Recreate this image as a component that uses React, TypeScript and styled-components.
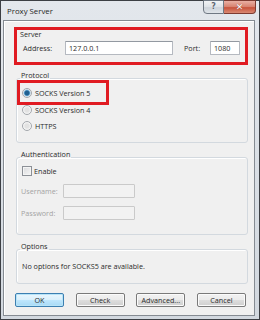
import React from "react";
import styled, { createGlobalStyle } from "styled-components";

const GlobalStyle = createGlobalStyle`
  html, body {
    margin: 0;
    padding: 0;
    background: #ffffff;
  }
  body {
    font-family: "Open Sans", "Liberation Sans", sans-serif;
    font-size: 7.2px;
    color: #2b2b2b;
  }
`;

const Window = styled.div`
  width: 260px;
  height: 320px;
  box-sizing: border-box;
  border: 1px solid #3c3f44;
  background: linear-gradient(#e3e7ec, #d2d8df);
  padding: 0 4px 3px 2px;
  display: flex;
  flex-direction: column;
`;

const TitleBar = styled.div`
  height: 19px;
  display: flex;
  align-items: flex-start;
`;

const Title = styled.div`
  margin: 5px 0 0 4px;
  font-size: 7.8px;
  line-height: 10px;
  color: #1f1f1f;
`;

const Controls = styled.div`
  margin-left: auto;
  margin-top: -1px;
  margin-right: -1px;
  display: flex;
`;

const CaptionButton = styled.div<{ $close?: boolean }>`
  height: 14px;
  width: ${(p) => (p.$close ? "32px" : "21px")};
  box-sizing: border-box;
  border: 1px solid ${(p) => (p.$close ? "#7d3b31" : "#6f7883")};
  border-left-width: ${(p) => (p.$close ? "0" : "1px")};
  border-radius: ${(p) => (p.$close ? "0 0 4px 0" : "0 0 0 4px")};
  background: ${(p) =>
    p.$close
      ? "linear-gradient(#e9b0a4, #d7806d 50%, #c8523b 55%, #d98a74)"
      : "linear-gradient(#f1f3f5, #dde2e7 50%, #cdd3da 55%, #dfe4e9)"};
  color: ${(p) => (p.$close ? "#ffffff" : "#5d6670")};
  font-family: "DejaVu Sans", sans-serif;
  font-weight: bold;
  font-size: ${(p) => (p.$close ? "9px" : "8px")};
  line-height: 12px;
  text-align: center;
  text-shadow: ${(p) => (p.$close ? "0 0 1px #7a2a1c" : "0 0 1px #ffffff")};
`;

const Client = styled.div`
  flex: 1;
  box-sizing: border-box;
  background: #f0f0f0;
  border: 1px solid #858b92;
  box-shadow: inset 1px 1px 0 #ffffff;
  padding: 6px 6px 8px 10px;
  display: flex;
  flex-direction: column;
`;

const Highlight = styled.div`
  border: 3px solid #e01b22;
  box-sizing: border-box;
`;

const ServerBox = styled(Highlight)`
  height: 38px;
  display: flex;
  flex-direction: column;
`;

const InlineLabel = styled.div`
  line-height: 8px;
  padding-left: 3px;
`;

const FieldRow = styled.div`
  display: flex;
  align-items: center;
  height: 14px;
`;

const ServerRow = styled(FieldRow)`
  margin-top: 3px;
  padding-left: 6px;
`;

const Label = styled.span<{ $w: number; $disabled?: boolean }>`
  width: ${(p) => p.$w}px;
  flex-shrink: 0;
  color: ${(p) => (p.$disabled ? "#a3a3a3" : "#2b2b2b")};
`;

const TextBox = styled.input<{ $w: number }>`
  width: ${(p) => p.$w}px;
  height: 14px;
  box-sizing: border-box;
  margin: 0;
  padding: 0 3px;
  border: 1px solid #b5b9c0;
  border-top-color: #9399a1;
  border-radius: 1px;
  background: #ffffff;
  font-family: "Open Sans", "Liberation Sans", sans-serif;
  font-size: 7.2px;
  color: #2b2b2b;
  outline: none;

  &:disabled {
    background: #f2f2f2;
    border-color: #cacaca;
  }
`;

const Group = styled.fieldset<{ $pad: string }>`
  margin: 6px 0 0 2px;
  padding: ${(p) => p.$pad};
  min-width: 0;
  border: 1px solid #d3d9df;
  border-radius: 3px;
  box-shadow: inset 1px 1px 0 #ffffff;
`;

const Legend = styled.legend`
  margin-left: 3px;
  padding: 0 1px 6px 1px;
  margin-bottom: -6px;
  line-height: 10px;
`;

const OptionRow = styled.div`
  display: flex;
  align-items: center;
  height: 16px;
  padding-left: 5px;
  gap: 1px;
`;

const RadioHighlight = styled(Highlight)`
  width: 92px;
  height: 25px;
  margin-bottom: -3px;
  display: flex;
  align-items: center;
  padding-left: 2px;
  gap: 1px;
`;

const RadioDot = styled.span<{ $checked?: boolean }>`
  width: 10px;
  height: 10px;
  box-sizing: border-box;
  border-radius: 50%;
  border: 1px solid #a3a7ac;
  background: ${(p) =>
    p.$checked
      ? "radial-gradient(circle, #1f5f8f 0 2px, #4b94c4 2.6px, #bcd6e8 3.3px, #f1f1f1 4px)"
      : "radial-gradient(circle, #e2e2e2 0 2px, #f9f9f9 4px)"};
  flex-shrink: 0;
  margin-right: 2px;
`;

const CheckBox = styled.span`
  width: 10px;
  height: 10px;
  box-sizing: border-box;
  border: 1px solid #8c9096;
  background: linear-gradient(135deg, #d9dadc, #f6f6f6);
  box-shadow: inset 0 0 0 1px #f4f4f4;
  flex-shrink: 0;
  margin-right: 1px;
`;

const AuthRow = styled(FieldRow)<{ $top: number }>`
  margin-top: ${(p) => p.$top}px;
  padding-left: 4px;
`;

const Note = styled.div`
  line-height: 12px;
  padding-left: 5px;
`;

const ButtonBar = styled.div`
  margin-top: auto;
  display: flex;
  justify-content: space-between;
  padding: 0 2px 0 1px;
`;

const Button = styled.button<{ $default?: boolean }>`
  width: 49px;
  height: 14px;
  margin: 0;
  padding: 0;
  box-sizing: border-box;
  border: 1px solid ${(p) => (p.$default ? "#3c7fb1" : "#7a7a7a")};
  border-radius: 2px;
  background: ${(p) =>
    p.$default
      ? "linear-gradient(#eaf6fd, #d9f0fc 50%, #bee6fd 52%, #a7d9f5)"
      : "linear-gradient(#f2f2f2, #ebebeb 50%, #dddddd 52%, #cfcfcf)"};
  box-shadow: inset 0 0 0 1px ${(p) => (p.$default ? "#b8e4f8" : "#fbfbfb")};
  font-family: "Open Sans", "Liberation Sans", sans-serif;
  font-size: 7.2px;
  line-height: 12px;
  color: #2b2b2b;
`;

export default function App() {
  return (
    <>
      <GlobalStyle />
      <Window>
        <TitleBar>
          <Title>Proxy Server</Title>
          <Controls>
            <CaptionButton>?</CaptionButton>
            <CaptionButton $close>✕</CaptionButton>
          </Controls>
        </TitleBar>
        <Client>
          <ServerBox>
            <InlineLabel>Server</InlineLabel>
            <ServerRow>
              <Label $w={42}>Address:</Label>
              <TextBox $w={108} defaultValue="127.0.0.1" />
              <Label $w={26} style={{ marginLeft: 11 }}>
                Port:
              </Label>
              <TextBox $w={30} defaultValue="1080" />
            </ServerRow>
          </ServerBox>

          <Group $pad="0 0 8px 0" style={{ marginTop: 5 }}>
            <Legend>Protocol</Legend>
            <RadioHighlight>
              <RadioDot $checked />
              SOCKS Version 5
            </RadioHighlight>
            <OptionRow>
              <RadioDot />
              SOCKS Version 4
            </OptionRow>
            <OptionRow>
              <RadioDot />
              HTTPS
            </OptionRow>
          </Group>

          <Group $pad="4px 0 14px 0">
            <Legend>Authentication</Legend>
            <OptionRow>
              <CheckBox />
              Enable
            </OptionRow>
            <AuthRow $top={5}>
              <Label $w={42} $disabled>
                Username:
              </Label>
              <TextBox $w={72} disabled />
            </AuthRow>
            <AuthRow $top={8}>
              <Label $w={42} $disabled>
                Password:
              </Label>
              <TextBox $w={72} disabled />
            </AuthRow>
          </Group>

          <Group $pad="9px 0 11px 0">
            <Legend>Options</Legend>
            <Note>No options for SOCKS5 are available.</Note>
          </Group>

          <ButtonBar>
            <Button $default>OK</Button>
            <Button>Check</Button>
            <Button>Advanced...</Button>
            <Button>Cancel</Button>
          </ButtonBar>
        </Client>
      </Window>
    </>
  );
}
